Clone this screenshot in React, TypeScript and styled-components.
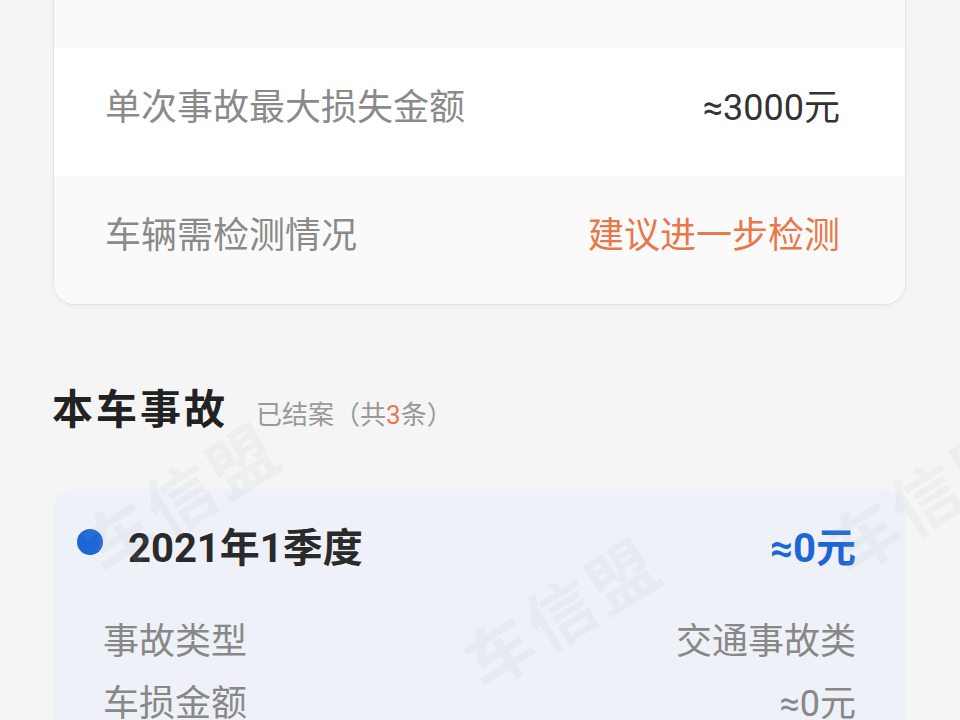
import React from "react";
import styled, { createGlobalStyle } from "styled-components";

const Global = createGlobalStyle`
  html, body { margin: 0; padding: 0; background: #f5f5f5; }
  body {
    font-family: Roboto, "Noto Sans CJK SC", "Noto Sans", sans-serif;
    overflow: hidden;
  }
`;

const Page = styled.div`
  position: relative;
  width: 960px;
  height: 720px;
  overflow: hidden;
  background: #f5f5f5;
  padding: 0 54px 0 53px;
  box-sizing: border-box;
`;

const InfoCard = styled.div`
  margin-top: -81px;
  border: 1px solid #e4e4e4;
  border-radius: 22px;
  overflow: hidden;
  background: #fff;
  box-shadow: 0 2px 4px rgba(0, 0, 0, 0.04);
`;

const InfoRow = styled.div<{ $alt?: boolean }>`
  height: 128px;
  box-sizing: border-box;
  display: flex;
  align-items: center;
  justify-content: space-between;
  padding: 0 65px 8px 51px;
  background: ${(p) => (p.$alt ? "#fafafa" : "#ffffff")};
  font-size: 36px;
  line-height: 1;
`;

const Label = styled.span`
  color: #8a8a8a;
`;

const Value = styled.span<{ $tone?: "warn" | "normal" }>`
  color: ${(p) => (p.$tone === "warn" ? "#e8784a" : "#333333")};
`;

const SectionHead = styled.div`
  display: flex;
  align-items: baseline;
  gap: 28px;
  margin: 71px 0 0 -1px;
  height: 50px;
`;

const SectionTitle = styled.h2`
  margin: 0;
  font-size: 41px;
  font-weight: 700;
  color: #222;
  letter-spacing: 3px;
`;

const SectionSub = styled.span`
  font-size: 26px;
  color: #999;
`;

const Num = styled.span`
  color: #e8784a;
`;

const AccidentCard = styled.div`
  position: relative;
  margin-top: 63px;
  background: #eef1f7;
  border-radius: 22px;
  padding: 30px 50px 40px 24px;
`;

const AccHeader = styled.div`
  display: flex;
  align-items: center;
  height: 52px;
`;

const Dot = styled.span`
  width: 26px;
  height: 26px;
  border-radius: 50%;
  background: #1d66d6;
  margin-right: 25px;
  margin-top: -6px;
  flex: none;
`;

const AccTitle = styled.span`
  font-size: 40px;
  font-weight: 700;
  color: #2a2a2a;
  flex: 1;
`;

const AccAmount = styled.span`
  font-size: 40px;
  font-weight: 700;
  color: #1d66d6;
`;

const Details = styled.div`
  margin-top: 36px;
  padding-left: 26px;
  display: flex;
  flex-direction: column;
`;

const DetailRow = styled.div`
  display: flex;
  justify-content: space-between;
  align-items: center;
  height: 62px;
  font-size: 36px;
  color: #888;
`;

const Watermark = styled.span<{ $x: number; $y: number }>`
  position: absolute;
  left: ${(p) => p.$x}px;
  top: ${(p) => p.$y}px;
  font-size: 68px;
  font-weight: 700;
  color: rgba(170, 175, 190, 0.09);
  transform: rotate(-32deg);
  transform-origin: left bottom;
  pointer-events: none;
  white-space: nowrap;
  letter-spacing: 4px;
`;

export default function App() {
  return (
    <>
      <Global />
      <Page>
        <InfoCard>
          <InfoRow $alt />
          <InfoRow>
            <Label>单次事故最大损失金额</Label>
            <Value>≈3000元</Value>
          </InfoRow>
          <InfoRow $alt>
            <Label>车辆需检测情况</Label>
            <Value $tone="warn">建议进一步检测</Value>
          </InfoRow>
        </InfoCard>

        <SectionHead>
          <SectionTitle>本车事故</SectionTitle>
          <SectionSub>
            已结案（共<Num>3</Num>条）
          </SectionSub>
        </SectionHead>

        <AccidentCard>
          <AccHeader>
            <Dot />
            <AccTitle>2021年1季度</AccTitle>
            <AccAmount>≈0元</AccAmount>
          </AccHeader>
          <Details>
            <DetailRow>
              <span>事故类型</span>
              <span>交通事故类</span>
            </DetailRow>
            <DetailRow>
              <span>车损金额</span>
              <span>≈0元</span>
            </DetailRow>
          </Details>
        </AccidentCard>

        <Watermark $x={115} $y={495}>车信盟</Watermark>
        <Watermark $x={495} $y={610}>车信盟</Watermark>
        <Watermark $x={860} $y={495}>车信盟</Watermark>
      </Page>
    </>
  );
}
